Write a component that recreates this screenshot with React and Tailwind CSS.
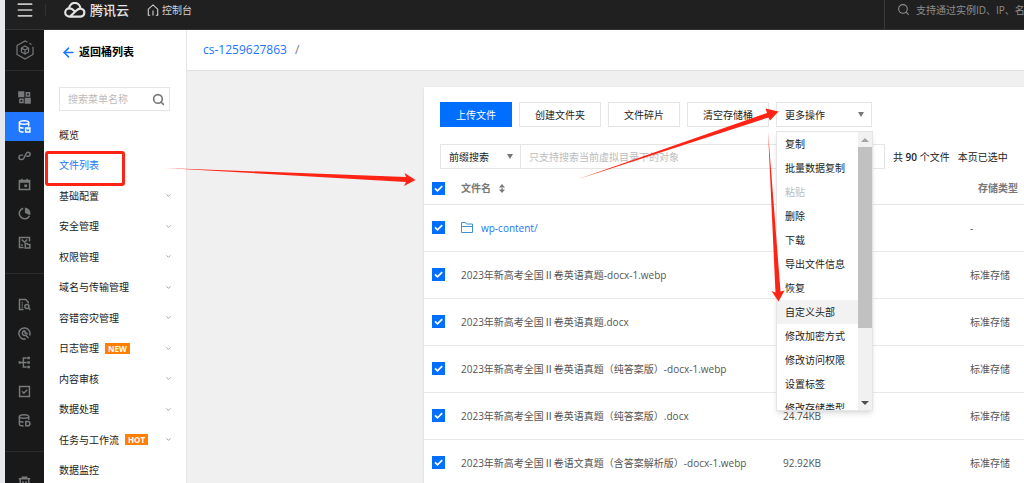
import React from 'react';
import { ChevronDown, Search, ArrowLeft, Menu } from 'lucide-react';

const menuItems = [
  { label: '概览' },
  { label: '文件列表', active: true },
  { label: '基础配置', expandable: true },
  { label: '安全管理', expandable: true },
  { label: '权限管理', expandable: true },
  { label: '域名与传输管理', expandable: true },
  { label: '容错容灾管理', expandable: true },
  { label: '日志管理', expandable: true, badge: 'NEW' },
  { label: '内容审核', expandable: true },
  { label: '数据处理', expandable: true },
  { label: '任务与工作流', expandable: true, badge: 'HOT' },
  { label: '数据监控' },
];

const files = [
  { name: 'wp-content/', folder: true, size: '', type: '-' },
  { name: '2023年新高考全国Ⅱ卷英语真题-docx-1.webp', size: '', type: '标准存储' },
  { name: '2023年新高考全国Ⅱ卷英语真题.docx', size: '', type: '标准存储' },
  { name: '2023年新高考全国Ⅱ卷英语真题（纯答案版）-docx-1.webp', size: '', type: '标准存储' },
  { name: '2023年新高考全国Ⅱ卷英语真题（纯答案版）.docx', size: '24.74KB', type: '标准存储' },
  { name: '2023年新高考全国Ⅱ卷语文真题（含答案解析版）-docx-1.webp', size: '92.92KB', type: '标准存储' },
];

const actions = [
  { label: '复制' },
  { label: '批量数据复制' },
  { label: '粘贴', disabled: true },
  { label: '删除' },
  { label: '下载' },
  { label: '导出文件信息' },
  { label: '恢复' },
  { label: '自定义头部', hovered: true },
  { label: '修改加密方式' },
  { label: '修改访问权限' },
  { label: '设置标签' },
  { label: '修改存储类型' },
];

// 14x14 line icons of the product rail
const icons = {
  grid: (
    <>
      <path d="M1 1h5v5H1zM8 8h5v5H8z" fill="currentColor" />
      <path d="M9 2h3.400v3.400H9zM2 9h3.400v3.400H2z" />
    </>
  ),
  storage: (
    <>
      <ellipse cx="6.5" cy="2.8" rx="5" ry="1.9" />
      <path d="M1.5 2.8v8.4c0 1 2 1.8 4.5 1.8M11.5 2.8V7M1.5 7c0 1 2 1.7 4.5 1.7" />
      <path d="M8.2 8.6h4.6v4.2H8.2zM10.5 8.6v2" />
    </>
  ),
  link: (
    <path d="M5.600 6.600H3.400a2.400 2.400 0 0 0 0 4.800h.600c1 0 1.700-.500 2.200-1.300l2.600-5.200C9.200 4 9.900 3.400 10.800 3.400a2.200 2.200 0 0 1 0 4.400H8.900" />
  ),
  calendar: (
    <>
      <path d="M1.5 2.8h11v9.7h-11zM1.5 4.200h11M4.200.8v2.5M9.800.8v2.5" />
      <path d="M6.8 7h3v2.800h-3z" fill="currentColor" stroke="none" />
    </>
  ),
  pie: (
    <>
      <path d="M5.6 1.3a5.8 5.8 0 1 0 6.8 8.2" />
      <path d="M7.5.5a6.300 6.300 0 0 1 5.500 8.300L7.5 6.5z" fill="currentColor" stroke="none" />
    </>
  ),
  archive: (
    <>
      <path d="M6 12.4H1.6V1.6h10.8V6M4 3.800l3 3 3-3M3.400 9.600h1.800" />
      <path d="M7.8 8.2h2l.8.9h2.2v3.7h-5z" />
    </>
  ),
  doc: (
    <>
      <path d="M6 12.3H1.6V1.7h6.6L11 4.4V6M4 5h1.2M4 7.5h1.2M4 10h1.2" />
      <circle cx="9.6" cy="9.2" r="2.2" />
      <path d="m11.2 10.8 2 2" />
    </>
  ),
  wrench: (
    <>
      <path d="M8.500 12.800a6 6 0 1 1 4-3.600" />
      <path d="M7.600 4.100a2.600 2.600 0 0 0-2.500 4 2.600 2.600 0 0 0 3.200.800l3 3M9.900 6.400a2.600 2.600 0 0 1-.600 1.600M7.600 4.100v2.300h2.300" />
    </>
  ),
  tree: (
    <>
      <path d="M.8 7h8.600M9.400 2.100H5.800v9.800h3.600" />
      <path d="M10 .8h2.800v2.600H10zM10 5.7h2.800v2.600H10zM10 10.6h2.800v2.600H10zM.8 5.600h2v2.800h-2z" fill="currentColor" stroke="none" />
    </>
  ),
  check: <path d="M1.7 1.7h10.600v10.600H1.700zM4.300 6.800l2 2 3.600-3.600" />,
  database: (
    <>
      <ellipse cx="6.5" cy="2.8" rx="5" ry="1.9" />
      <path d="M1.5 2.8v8.2c0 1 2 1.8 4.5 1.8M11.5 2.8v3.4M1.5 6.9c0 1 2 1.8 4.5 1.8" />
      <path d="M8.400 8.200h2.200a2.200 2.200 0 0 1 0 4.500H8.400z" />
    </>
  ),
  trash: <path d="M.8 3h12.400M4.600 3V1.400h4.800V3M2.400 3.200v9.600h9.200V3.200M5.400 5.600v5M8.600 5.600v5" />,
};

function RailIcon({ name, active }) {
  return (
    <a
      href="#"
      aria-label={name}
      className={`flex h-[29px] items-center justify-center ${
        active ? 'bg-[#2277ff] text-white' : 'text-[#77797b]'
      }`}
    >
      <svg viewBox="0 0 14 14" className="h-[13px] w-[13px]" fill="none" stroke="currentColor" strokeWidth="1.6">
        {icons[name]}
      </svg>
    </a>
  );
}

function TopBar() {
  return (
    <header className="flex h-[30px] shrink-0 items-start border-b border-[#333] bg-[#202020] text-[10px] leading-5 text-[#d0d0d0]">
      <button aria-label="菜单" className="flex h-5 w-10 items-center justify-center">
        <Menu className="h-5 w-5 text-[#c4c6c6]" strokeWidth={2} />
      </button>
      <span className="mt-1 h-3 w-px bg-[#333]" />
      <a href="#" className="ml-[18px] flex items-center gap-1 text-[13px] font-medium text-[#e4e4e4]">
        <svg viewBox="0 0 22 16" className="h-4 w-[22px]" fill="none" stroke="currentColor" strokeWidth="2.1">
          <path d="M5.6 14.6h11a4 4 0 0 0 .6-7.9c-2-.3-3.500.500-4.800 1.800L6 14.600C3.400 14.800 1.200 13 1.200 10.500s2-4.100 4.200-4.100c2.200 0 3.400.900 5.200 2.800" />
          <path d="M5.200 6.400a5.600 5.600 0 0 1 11.200.200" />
        </svg>
        腾讯云
      </a>
      <a href="#" className="ml-[18px] flex items-center gap-[3px]">
        <svg viewBox="0 0 12 12" className="h-3 w-3" fill="none" stroke="currentColor" strokeWidth="1.1">
          <path d="M3.200 11.200H1.300V5.200L6 .900l4.700 4.300v6H8.800M6 6.500v5" />
        </svg>
        控制台
      </a>
      <label className="ml-auto flex h-[29px] w-[140px] items-start gap-[6px] overflow-hidden border-l border-[#3a3a3a] pl-3 text-[#8e8e8e]">
        <Search className="mt-[3px] h-[13px] w-[13px] shrink-0" />
        <input
          aria-label="搜索"
          placeholder="支持通过实例ID、IP、名称等搜索资源"
          className="h-5 min-w-0 flex-1 bg-transparent outline-none placeholder:text-[#8e8e8e]"
        />
      </label>
    </header>
  );
}

function Rail() {
  return (
    <nav className="w-[39px] shrink-0 overflow-hidden bg-[#191919]">
      <a href="#" aria-label="产品" className="flex h-[41px] items-center justify-center border-b border-[#2c2c2c] text-[#77797b]">
        <svg viewBox="0 0 20 20" className="h-5 w-5" fill="none" stroke="currentColor" strokeWidth="1.2">
          <path d="M12.500 2.200 10 .900 2 5.500v9L10 19.100l8-4.600V6.800M14.500 3.400l2 1.100" />
          <path d="m10 6 3.600 2v4L10 14l-3.600-2V8zM6.400 8l3.600 2 3.600-2M10 10v4" />
        </svg>
      </a>
      <div className="border-b border-[#2c2c2c] pt-3 pb-4">
        <RailIcon name="grid" />
        <RailIcon name="storage" active />
        <RailIcon name="link" />
        <RailIcon name="calendar" />
        <RailIcon name="pie" />
        <RailIcon name="archive" />
      </div>
      <div className="border-b border-[#2c2c2c] pt-4 pb-4">
        <RailIcon name="doc" />
        <RailIcon name="wrench" />
        <RailIcon name="tree" />
        <RailIcon name="check" />
        <RailIcon name="database" />
      </div>
      <div className="pt-4">
        <RailIcon name="trash" />
      </div>
    </nav>
  );
}

function Sidebar() {
  return (
    <aside className="w-[143px] shrink-0 overflow-hidden border-r border-[#e5e5e5] bg-white">
      <a href="#" className="flex items-center gap-[3px] pt-3 pl-[17px] text-[11px] leading-5 font-bold text-black">
        <ArrowLeft className="h-[15px] w-[15px] text-[#1a75ff]" strokeWidth={2.5} />
        返回桶列表
      </a>
      <label className="mt-[25px] mr-4 ml-[15px] flex h-6 items-center border border-[#e5e5e5] px-2">
        <input
          aria-label="搜索菜单名称"
          placeholder="搜索菜单名称"
          className="min-w-0 flex-1 bg-transparent outline-none placeholder:text-[#bbb]"
        />
        <Search className="-mr-1 h-[13px] w-[13px] text-[#777] mx-1" strokeWidth={3} />
      </label>
      <ul className="mt-2">
        {menuItems.map((item) => (
          <li key={item.label} className="odd:h-[31px] even:h-[30px]">
            <a
              href="#"
              className={`flex h-full items-center pr-3.5 pl-[15px] ${item.active ? 'text-[#1a75ff]' : 'text-[#222]'}`}
            >
              {item.label}
              {item.badge && (
                <span className="ml-[6px] bg-[#ff7f00] px-[3px] text-[8px] leading-[11px] font-bold text-white">
                  {item.badge}
                </span>
              )}
              {item.expandable && <ChevronDown className="ml-auto h-[7px] w-[7px] text-[#999]" strokeWidth={3} />}
            </a>
          </li>
        ))}
      </ul>
    </aside>
  );
}

function Checkbox({ label }) {
  return (
    <label className="relative block h-[13px] w-[13px]">
      <input
        type="checkbox"
        defaultChecked
        aria-label={label}
        className="peer block h-[13px] w-[13px] appearance-none border border-[#ccc] bg-white checked:border-[#006eff] checked:bg-[#006eff]"
      />
      <svg
        viewBox="0 0 13 13"
        className="pointer-events-none absolute inset-0 hidden peer-checked:block"
        fill="none"
        stroke="white"
        strokeWidth="1.8"
      >
        <path d="m3 6.300 2.500 2.500L10.200 4.200" />
      </svg>
    </label>
  );
}

function Caret() {
  return (
    <svg viewBox="0 0 6 5" className="h-[5px] w-[6px]" fill="#777">
      <path d="M0 0h6L3 5z" />
    </svg>
  );
}

function MoreActions() {
  return (
    <div className="relative w-24">
      <button className="flex h-[25px] w-full items-center justify-between border border-[#e5e5e5] pr-[7px] pl-2">
        更多操作
        <Caret />
      </button>
      <div className="absolute top-[29px] left-0 z-10 flex h-[280px] w-[97px] border border-[#e5e5e5] bg-white shadow-md">
        <ul className="flex-1 overflow-hidden">
          {actions.map((action) => (
            <li key={action.label}>
              <button
                disabled={action.disabled}
                className={`block h-6 w-full pl-2 text-left whitespace-nowrap disabled:text-[#bbb] ${
                  action.hovered ? 'bg-[#f2f2f2]' : ''
                }`}
              >
                {action.label}
              </button>
            </li>
          ))}
        </ul>
        <div className="flex w-[14px] flex-col items-center bg-[#f1f1f1]">
          <svg viewBox="0 0 14 15" className="h-[15px] w-[14px]" fill="#a3a3a3">
            <path d="M3 10h8L7 6z" />
          </svg>
          <div className="h-[181px] w-full bg-[#c1c1c1]" />
          <svg viewBox="0 0 14 15" className="mt-auto h-[15px] w-[14px]" fill="#505050">
            <path d="M3 6h8l-4 4z" />
          </svg>
        </div>
      </div>
    </div>
  );
}

function Toolbar() {
  const button = 'h-[25px] border px-[15px] whitespace-nowrap';
  return (
    <div className="px-4 pt-[15px]">
      <div className="flex gap-[7px]">
        <button className={`${button} border-[#006eff] bg-[#006eff] text-white`}>上传文件</button>
        <button className={`${button} border-[#e5e5e5]`}>创建文件夹</button>
        <button className={`${button} border-[#e5e5e5]`}>文件碎片</button>
        <button className={`${button} border-[#e5e5e5]`}>清空存储桶</button>
        <MoreActions />
      </div>
      <div className="mt-[17px] -mr-4 flex items-center">
        <div className="relative h-[25px] w-[81px]">
          <select
            aria-label="搜索方式"
            className="h-full w-full appearance-none border border-[#e5e5e5] bg-white pl-2 outline-none"
          >
            <option>前缀搜索</option>
          </select>
          <span className="pointer-events-none absolute top-[10px] right-2">
            <Caret />
          </span>
        </div>
        <input
          aria-label="搜索文件"
          placeholder="只支持搜索当前虚拟目录下的对象"
          className="h-[25px] max-w-[364px] min-w-0 flex-1 border border-l-0 border-[#e5e5e5] pl-2 outline-none placeholder:text-[#bbb]"
        />
        <span className="ml-2 whitespace-nowrap">
          共 <b className="font-semibold">90</b> 个文件
        </span>
        <span className="ml-2 whitespace-nowrap">本页已选中</span>
      </div>
    </div>
  );
}

function FileTable() {
  return (
    <table className="w-full table-fixed text-left text-[#555]">
      <thead>
        <tr className="h-[35px] border-b border-[#e5e5e5] text-[#777]">
          <th className="w-[37px] pt-1 pl-2">
            <Checkbox label="全选" />
          </th>
          <th className="pt-1 font-bold">
            <span className="flex items-center gap-2">
              文件名
              <svg viewBox="0 0 6 9" className="h-[9px] w-[6px]" fill="#777">
                <path d="M0 3.500h6L3 0zM0 5.500h6L3 9zM2.400 3h1.200v3H2.400z" />
              </svg>
            </span>
          </th>
          <th className="w-[187px]" />
          <th className="w-[54px] pt-1 pl-2 font-bold whitespace-nowrap">存储类型</th>
        </tr>
      </thead>
      <tbody>
        {files.map((file) => (
          <tr key={file.name} className="h-[47px] border-b border-[#e9e9e9]">
            <td className="pl-2">
              <Checkbox label={file.name} />
            </td>
            <td className="whitespace-nowrap">
              {file.folder ? (
                <a href="#" className="flex items-center gap-2 font-medium text-[#1a75ff]">
                  <svg viewBox="0 0 12 11" className="h-[11px] w-3" fill="none" stroke="#3d8fd1">
                    <path d="M.5 10.500V.500h4l1 1.500h6v8.500zM.5 4.500h11" />
                  </svg>
                  {file.name}
                </a>
              ) : (
                file.name
              )}
            </td>
            <td>{file.size}</td>
            <td className="whitespace-nowrap">{file.type}</td>
          </tr>
        ))}
      </tbody>
    </table>
  );
}

function Annotations() {
  return (
    <div className="pointer-events-none absolute top-0 left-0 z-20">
      <svg width="880" height="320" viewBox="0 0 880 320" fill="#fd2416">
        <rect x="46.5" y="152.5" width="77" height="32" rx="1.5" fill="none" stroke="#fd2416" strokeWidth="3" />
        <path d="M165 168 406 177 404.500 173 415.500 180 404 186 406 182Z" />
        <path d="M577 179.500 767 113 765.500 108.500 778.500 111.500 770 120.500 768.500 117.500Z" />
        <path d="M768 131 780.500 291.500 784.500 290.500 778.500 301.500 771.500 291 775.500 292.500Z" />
      </svg>
    </div>
  );
}

export default function App() {
  return (
    <div className="relative flex h-screen overflow-hidden bg-[#e6e8ee] pl-[5px] font-['Open_Sans','Noto_Sans_CJK_SC',sans-serif] text-[10px] leading-4 text-[#222]">
      <div className="flex min-w-0 flex-1 flex-col">
        <TopBar />
        <div className="flex min-h-0 flex-1">
          <Rail />
          <Sidebar />
          <main className="min-w-0 flex-1 overflow-hidden bg-[#f0f0f0]">
            <div className="flex h-[41px] items-center gap-2 border-b border-[#e0e0e0] bg-white px-4 text-xs text-[#777]">
              <a href="#" className="text-[#1a75ff]">
                cs-1259627863
              </a>
              <span>/</span>
            </div>
            <div className="mt-4 ml-[237px] bg-white shadow">
              <Toolbar />
              <FileTable />
            </div>
          </main>
        </div>
      </div>
      <Annotations />
    </div>
  );
}
